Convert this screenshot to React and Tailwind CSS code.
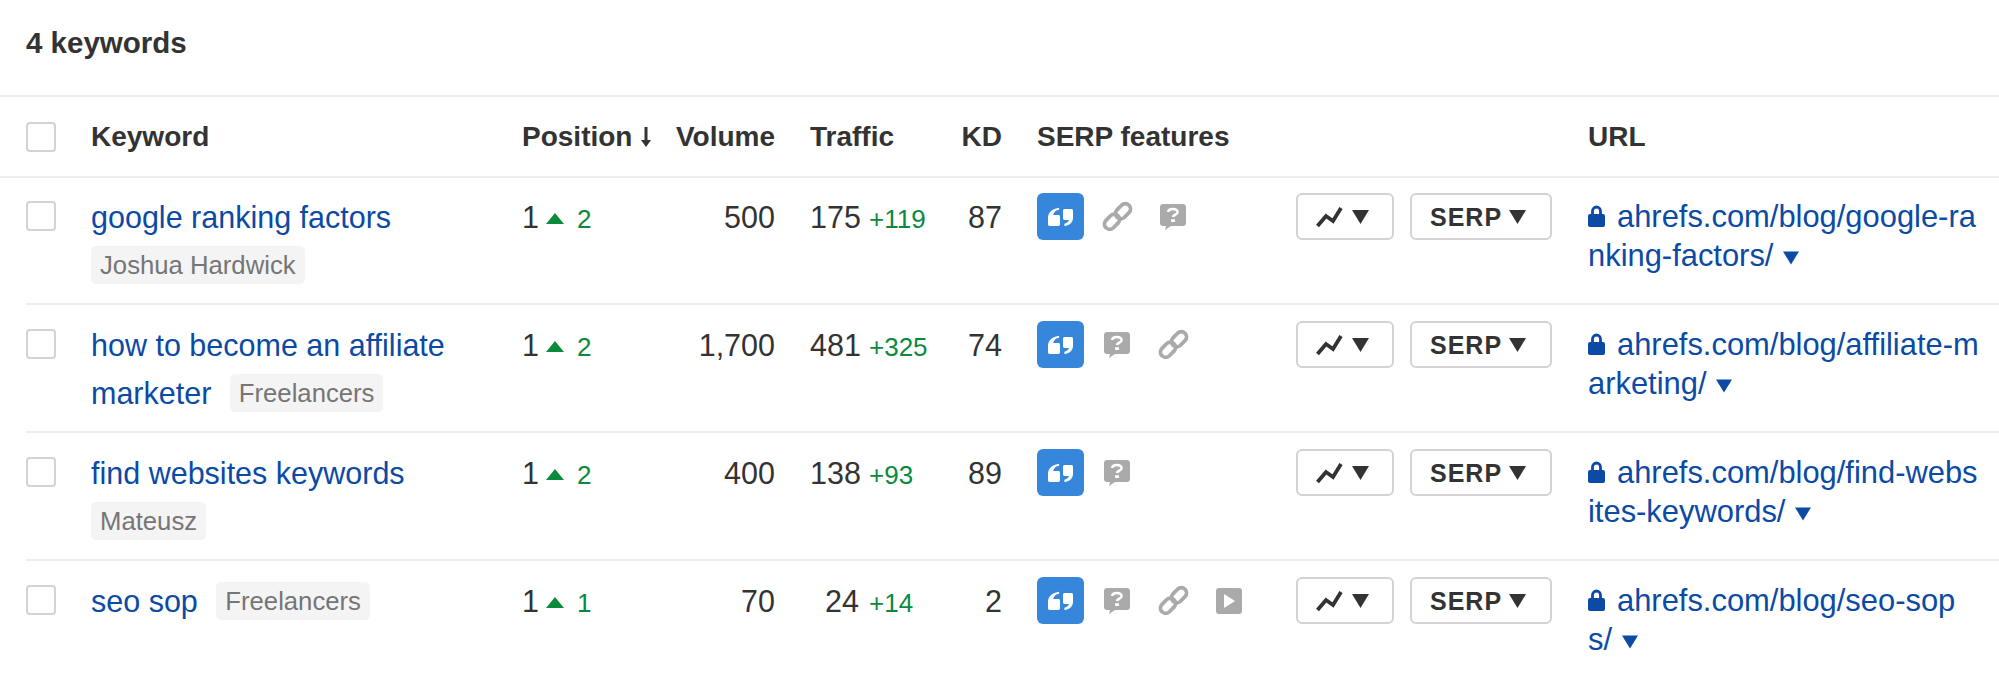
const rows = [
  {
    keyword: "google ranking factors",
    tag: "Joshua Hardwick",
    change: 2,
    volume: "500",
    traffic: "175",
    delta: "+119",
    kd: 87,
    features: ["link", "question"],
    url: ["ahrefs.com/blog/google-ra", "nking-factors/"],
  },
  {
    keyword: "how to become an affiliate marketer",
    tag: "Freelancers",
    change: 2,
    volume: "1,700",
    traffic: "481",
    delta: "+325",
    kd: 74,
    features: ["question", "link"],
    url: ["ahrefs.com/blog/affiliate-m", "arketing/"],
  },
  {
    keyword: "find websites keywords",
    tag: "Mateusz",
    change: 2,
    volume: "400",
    traffic: "138",
    delta: "+93",
    kd: 89,
    features: ["question"],
    url: ["ahrefs.com/blog/find-webs", "ites-keywords/"],
  },
  {
    keyword: "seo sop",
    tag: "Freelancers",
    change: 1,
    volume: "70",
    traffic: "24",
    delta: "+14",
    kd: 2,
    features: ["question", "link", "video"],
    url: ["ahrefs.com/blog/seo-sop", "s/"],
  },
];

function Caret({ className }) {
  return (
    <svg viewBox="0 0 17 14" className={className} fill="currentColor">
      <path d="M0 0h17L8.500 14z" />
    </svg>
  );
}

function Checkbox() {
  return <div className="w-[30px] h-[30px] rounded-[4px] border-2 border-[#d3d3d3] bg-white" />;
}

function QuoteIcon() {
  return (
    <div className="w-[47px] h-[47px] rounded-[6px] bg-[#3687dc]">
      <svg viewBox="0 0 47 47" className="w-[47px] h-[47px]" fill="#fff">
        <path d="M22.500 16.500c-3.800.9-5.700 2.500-6.300 5.500h5.100c1 0 1.700.7 1.700 1.700v7.600c0 1-.7 1.700-1.700 1.700h-8.600c-1 0-1.700-.7-1.700-1.700v-6.300c0-5 3.400-8.700 10.500-10.200z" />
        <path d="M27.700 16h6.600c1 0 1.700.7 1.700 1.700v6.800c0 4.700-2.800 7.700-8.500 8.600l-.3-2.300c2.700-.7 4.200-1.900 4.700-3.800h-4.200c-1 0-1.700-.7-1.700-1.700v-7.600c0-1 .7-1.700 1.700-1.700z" />
      </svg>
    </div>
  );
}

function QuestionIcon() {
  return (
    <svg viewBox="0 0 26 26" className="w-[26px] h-[26px]">
      <path
        fill="#aaaaaa"
        d="M3 0h20c1.700 0 3 1.300 3 3v16c0 1.700-1.300 3-3 3H11l-6 4 1-4H3c-1.700 0-3-1.300-3-3V3c0-1.700 1.300-3 3-3z"
      />
      <path d="M8 8c.4-2 2.200-3 4.800-3 2.800 0 4.700 1.200 4.700 3.200 0 2.800-4.300 2.300-4.500 4.800" fill="none" stroke="#fff" strokeWidth="2.600" />
      <rect x="11" y="15.200" width="4" height="2.800" fill="#fff" />
    </svg>
  );
}

function LinkIcon() {
  return (
    <svg viewBox="0 0 31 31" className="w-[31px] h-[31px]" fill="none" stroke="#aaaaaa" strokeWidth="3.800">
      <rect x="1.500" y="15.500" width="17" height="10.500" rx="5.250" transform="rotate(-45 10 20.750)" />
      <rect x="12.500" y="5" width="17" height="10.500" rx="5.250" transform="rotate(-45 21 10.250)" />
    </svg>
  );
}

function VideoIcon() {
  return (
    <svg viewBox="0 0 26 26" className="w-[26px] h-[26px]">
      <rect width="26" height="26" rx="3" fill="#aaaaaa" />
      <path d="M8 6l11 7-11 7z" fill="#fff" />
    </svg>
  );
}

function Feature({ type }) {
  return (
    <div className="w-[56px] h-[47px] flex items-center justify-center">
      {type === "question" && <QuestionIcon />}
      {type === "link" && <LinkIcon />}
      {type === "video" && <VideoIcon />}
    </div>
  );
}

function ChartButton() {
  return (
    <button className="w-[98px] h-[47px] pl-[18px] rounded-[6px] border-2 border-[#d3d3d3] bg-white flex items-center gap-[9px] text-[#333]">
      <svg viewBox="0 0 27 22" className="w-[27px] h-[22px]" fill="none" stroke="currentColor" strokeWidth="3.800">
        <path d="M1.500 20 10 10l7 5 8-13" />
      </svg>
      <Caret className="w-[17px] h-[14px]" />
    </button>
  );
}

function SerpButton() {
  return (
    <button className="w-[142px] h-[47px] pl-[18px] rounded-[6px] border-2 border-[#d3d3d3] bg-white flex items-center gap-[7px] text-[#333] text-[25px] font-bold tracking-[1px]">
      SERP
      <Caret className="w-[17px] h-[14px]" />
    </button>
  );
}

function Row({ row, first }) {
  return (
    <div className={`ml-[26px] flex border-t-2 border-[#eeeeee] leading-[48px] ${first ? "h-[127px] pt-[15px]" : "h-[128px] pt-[16px]"}`}>
      <div className="w-[65px] pt-[8px]">
        <Checkbox />
      </div>
      <div className="w-[431px]">
        <a className="text-[#0b4aa5] mr-[10px]">{row.keyword}</a>{" "}
        <span className="inline-block h-[38px] leading-[38px] px-[9px] rounded-[5px] bg-[#f4f4f4] text-[#767676] text-[25.7px] align-[2px]">
          {row.tag}
        </span>
      </div>
      <div className="w-[130px]">
        1
        <svg viewBox="0 0 18 11" className="inline w-[18px] h-[11px] ml-[7px] mr-[13px] align-[4px] text-[#0a8a3f]" fill="currentColor">
          <path d="M9 0l9 11H0z" />
        </svg>
        <span className="text-[26px] text-[#0a8a3f]">{row.change}</span>
      </div>
      <div className="w-[123px] text-right">{row.volume}</div>
      <div className="w-[175px] pl-[35px] flex items-baseline">
        <span className="w-[49px] text-right">{row.traffic}</span>
        <span className="ml-[10px] text-[26px] text-[#0a8a3f]">{row.delta}</span>
      </div>
      <div className="w-[52px] text-right">{row.kd}</div>
      <div className="w-[294px] pl-[35px] flex items-start">
        <QuoteIcon />
        <div className="ml-[5px] flex">
          {row.features.map((f) => (
            <Feature key={f} type={f} />
          ))}
        </div>
      </div>
      <div className="w-[292px] flex items-start gap-[16px]">
        <ChartButton />
        <SerpButton />
      </div>
      <div className="flex-1 text-[#0b4aa5] text-[30.9px] leading-[39px] whitespace-nowrap pt-[4px]">
        <div>
          <svg viewBox="0 0 17 22" className="inline w-[17px] h-[22px] mr-[12px] align-[0px]" fill="currentColor">
            <path d="M4.500 10V6a4 4 0 0 1 8 0v4" fill="none" stroke="currentColor" strokeWidth="2.800" />
            <rect y="9" width="17" height="13" rx="2" />
          </svg>
          {row.url[0]}
        </div>
        <div>
          {row.url[1]}
          <Caret className="inline w-[16px] h-[14px] ml-[10px] align-[1px]" />
        </div>
      </div>
    </div>
  );
}

export default function App() {
  return (
    <div className="w-[1999px] h-[683px] overflow-hidden bg-white font-['Liberation_Sans',sans-serif] text-[30.5px] text-[#333]">
      <div className="h-[95px] pl-[26px] pt-[24px] text-[29.5px] leading-[38px] font-bold">4 keywords</div>
      <div className="flex items-center h-[81px] pl-[26px] border-t-2 border-[#eeeeee] text-[28px] font-bold">
        <div className="w-[65px]">
          <Checkbox />
        </div>
        <div className="w-[431px]">Keyword</div>
        <div className="w-[130px] flex items-center">
          Position
          <svg viewBox="0 0 10 20" className="w-[10px] h-[20px] ml-[9px]" fill="currentColor">
            <path d="M3.500 0h3v13H10l-5 7-5-7h3.500z" />
          </svg>
        </div>
        <div className="w-[123px] text-right">Volume</div>
        <div className="w-[175px] pl-[35px]">Traffic</div>
        <div className="w-[52px] text-right">KD</div>
        <div className="w-[294px] pl-[35px]">SERP features</div>
        <div className="w-[292px]" />
        <div className="flex-1">URL</div>
      </div>
      <div className="border-t-2 border-[#eeeeee]">
        {rows.map((row, i) => (
          <div key={row.keyword} className={i === 0 ? "-mt-[2px]" : ""}>
            <Row row={row} first={i === 0} />
          </div>
        ))}
      </div>
    </div>
  );
}
